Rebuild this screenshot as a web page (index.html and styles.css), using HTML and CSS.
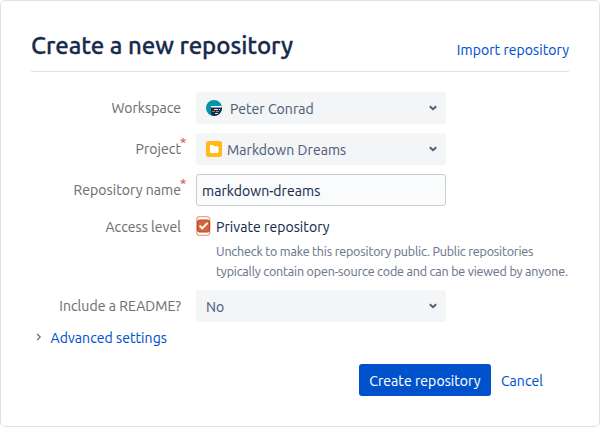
FILE: index.html
```html
<!DOCTYPE html>
<html lang="en">
<head>
<meta charset="utf-8">
<title>Create a new repository</title>
<link rel="stylesheet" href="styles.css">
</head>
<body>
<main class="panel">
  <header class="header">
    <h1 class="title">Create a new repository</h1>
    <a class="link import">Import repository</a>
  </header>
  <form class="form">
    <div class="row">
      <label class="label">Workspace</label>
      <div class="select">
        <svg class="avatar" width="16" height="16" viewBox="0 0 16 16"><circle cx="8" cy="8" r="8" fill="#0095a8"/><path d="M5 6h10.7a8 8 0 0 1-9.2 9.8L5 14z" fill="#172b4d"/><path d="M5 6h10.8v1.5H5z" fill="#fff"/><path d="M8 9.5h4M13 9.5h1M9 13.5h3" stroke="#d9dee8"/><path d="M6 11.5h3" stroke="#ff5630"/><path d="M10 11.5h3" stroke="#7f8da5"/></svg>
        <span class="value">Peter Conrad</span>
        <svg class="chevron" width="8" height="6" viewBox="0 0 8 6"><path d="M.8 1.2L4 4.2l3.2-3"/></svg>
      </div>
    </div>
    <div class="row">
      <label class="label">Project<sup>*</sup></label>
      <div class="select">
        <svg class="folder" width="16" height="16" viewBox="0 0 16 16"><rect width="16" height="16" rx="2.5" fill="#ffba18"/><path d="M4 5q0-1 1-1h2l1 1.2h3.5q1 0 1 1V11q0 1-1 1H5q-1 0-1-1z" fill="#fff"/></svg>
        <span class="value">Markdown Dreams</span>
        <svg class="chevron" width="8" height="6" viewBox="0 0 8 6"><path d="M.8 1.2L4 4.2l3.2-3"/></svg>
      </div>
    </div>
    <div class="row">
      <label class="label">Repository name<sup>*</sup></label>
      <div class="input">markdown-dreams</div>
    </div>
    <div class="row access">
      <label class="label">Access level</label>
      <div class="check-line">
        <svg class="checkbox" width="15" height="20" viewBox="0 0 15 20"><rect x=".65" y=".65" width="13.2" height="18.7" rx="3" fill="#fff" stroke="#eda68b" stroke-width="1.3"/><rect x="1.5" y="4" width="12" height="12" rx="1.8" fill="#dc623a" stroke="#a94d32"/><path d="M3.6 9.6l2.6 2.8L11.6 6.9" fill="none" stroke="#fff" stroke-width="2"/></svg>
        <span class="check-text">Private repository</span>
      </div>
    </div>
    <p class="help">Uncheck to make this repository public. Public repositories<br>typically contain open-source code and can be viewed by anyone.</p>
    <div class="row readme">
      <label class="label">Include a README?</label>
      <div class="select">
        <span class="value">No</span>
        <svg class="chevron" width="8" height="6" viewBox="0 0 8 6"><path d="M.8 1.2L4 4.2l3.2-3"/></svg>
      </div>
    </div>
    <div class="advanced">
      <svg width="6" height="8" viewBox="0 0 6 8"><path d="M1.2 1L4.2 4l-3 3" fill="none" stroke="#5e6c84" stroke-width="1.2"/></svg>
      <a class="link">Advanced settings</a>
    </div>
    <div class="actions">
      <div class="button">Create repository</div>
      <a class="link">Cancel</a>
    </div>
  </form>
</main>
</body>
</html>
```
FILE: styles.css
```css
* { box-sizing: border-box; }
body { margin: 0; background: #fff; font: 14px/20px "Ubuntu", "Noto Sans", sans-serif; letter-spacing: .07px; color: #172b4d; -webkit-text-stroke: .1px currentColor; }
.panel { width: 600px; height: 427px; padding: 0 30px; border: 1px solid #dfe1e6; border-radius: 5px; white-space: nowrap; }
.header { display: flex; justify-content: space-between; height: 71px; border-bottom: 1px solid #dfe1e6; }
.title { margin: 29px 0 0; font-size: 24px; line-height: 32px; font-weight: 500; letter-spacing: -.05px; -webkit-text-stroke: .3px currentColor; }
.link { color: #0052cc; }
.import { margin-top: 39px; }
.form { padding-top: 20px; }
.row { display: grid; grid-template-columns: 150px 250px; column-gap: 15px; height: 32px; margin-bottom: 9px; }
.label { position: relative; text-align: right; color: #707070; line-height: 32px; }
.label sup { position: absolute; left: 100%; top: -7px; color: #d04437; font-size: 13px; line-height: 32px; margin-left: -1px; }
.select { display: flex; align-items: center; padding: 0 9px 0 10px; border-radius: 3px; background: #f4f5f7; color: #505f79; }
.avatar { margin-right: 8px; }
.folder { margin-right: 5px; }
.value { padding-top: 1px; }
.chevron { margin: -1px 0 0 auto; fill: none; stroke: #505f79; stroke-width: 2; }
.input { display: flex; align-items: center; padding: 1px 5px 0; border: 1px solid #ccc; border-radius: 3px; background: #fafbfc; }
.access { grid-template-rows: 20px; height: 20px; margin: 10px 0 0; }
.access .label { line-height: 22px; }
.check-line { display: flex; align-items: center; }
.checkbox { margin-right: 5px; }
.check-text { padding-top: 1px; }
.help { margin: 5px 0 9px 185px; color: #6b778c; font-size: 12.5px; letter-spacing: -.16px; }
.readme { margin-bottom: 6px; }
.advanced { display: flex; align-items: center; height: 20px; padding-left: 5px; }
.advanced svg { margin: -3px 8.5px 0 0; }
.actions { display: flex; align-items: center; justify-content: flex-end; margin: 16px 26px 0 0; }
.button { display: flex; align-items: center; justify-content: center; width: 132px; height: 32px; margin-right: 10px; border-radius: 3px; background: #0052cc; color: #fff; }
.button, .actions .link { padding-top: 1px; }
```
